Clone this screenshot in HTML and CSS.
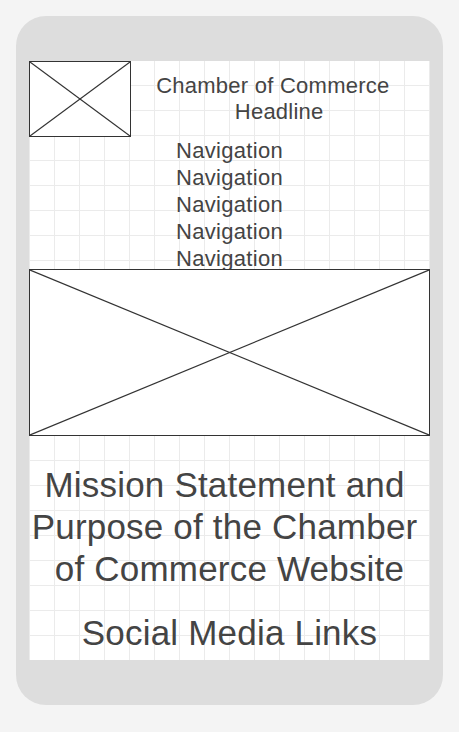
FILE: index.html
```html
<!DOCTYPE html>
<html lang="en">
<head>
<meta charset="utf-8">
<title>Chamber of Commerce Wireframe</title>
<link rel="stylesheet" href="styles.css">
</head>
<body>
<div class="phone">
  <div class="screen">
    <div class="header">
      <div class="placeholder thumb">
        <svg viewBox="0 0 100 100" preserveAspectRatio="none"><line x1="0" y1="0" x2="100" y2="100"/><line x1="100" y1="0" x2="0" y2="100"/></svg>
      </div>
      <div class="headtext">
        <div>Chamber of Commerce&nbsp;</div>
        <div>&nbsp;Headline</div>
      </div>
    </div>
    <div class="nav">
      <div>Navigation</div>
      <div>Navigation</div>
      <div>Navigation</div>
      <div>Navigation</div>
      <div>Navigation</div>
    </div>
    <div class="placeholder hero">
      <svg viewBox="0 0 100 100" preserveAspectRatio="none"><line x1="0" y1="0" x2="100" y2="100"/><line x1="100" y1="0" x2="0" y2="100"/></svg>
    </div>
    <div class="mission">
      <div>Mission Statement and&nbsp;</div>
      <div>Purpose of the Chamber&nbsp;</div>
      <div>of Commerce Website</div>
    </div>
    <div class="social">Social Media Links</div>
  </div>
</div>
</body>
</html>
```
FILE: styles.css
```css
html, body {
  margin: 0;
  padding: 0;
  background: #f4f4f4;
}
body {
  font-family: "Liberation Sans", Arial, sans-serif;
  color: #444;
}
.phone {
  box-sizing: border-box;
  margin: 16px 0 0 16px;
  width: 427px;
  height: 689px;
  padding: 45px 13px;
  background: #dddddd;
  border-radius: 30px;
}
.screen {
  width: 401px;
  height: 599px;
  background-color: #fff;
  background-image:
    linear-gradient(to right, #ebebeb 1px, transparent 1px),
    linear-gradient(to bottom, transparent 24px, #ebebeb 24px);
  background-size: 25px 25px;
  display: flex;
  flex-direction: column;
}
.header {
  display: flex;
  height: 76px;
}
.placeholder {
  box-sizing: border-box;
  border: 1px solid #333;
  background: #fff;
}
.placeholder svg {
  display: block;
  width: 100%;
  height: 100%;
}
.placeholder line {
  stroke: #333;
  stroke-width: 1.2;
  vector-effect: non-scaling-stroke;
}
.thumb {
  width: 102px;
  height: 76px;
  flex: none;
}
.headtext {
  width: 290px;
  padding-top: 12px;
  text-align: center;
  font-size: 22px;
  line-height: 26px;
  letter-spacing: 0.25px;
}
.nav {
  height: 132px;
  text-align: center;
  font-size: 22px;
  line-height: 27px;
  letter-spacing: 0.3px;
}
.hero {
  width: 401px;
  height: 167px;
  flex: none;
}
.mission {
  margin-top: 28px;
  text-align: center;
  font-size: 35px;
  line-height: 42px;
  letter-spacing: 0.2px;
}
.social {
  margin-top: 22px;
  text-align: center;
  font-size: 35px;
  line-height: 42px;
  letter-spacing: 0.2px;
}
```
